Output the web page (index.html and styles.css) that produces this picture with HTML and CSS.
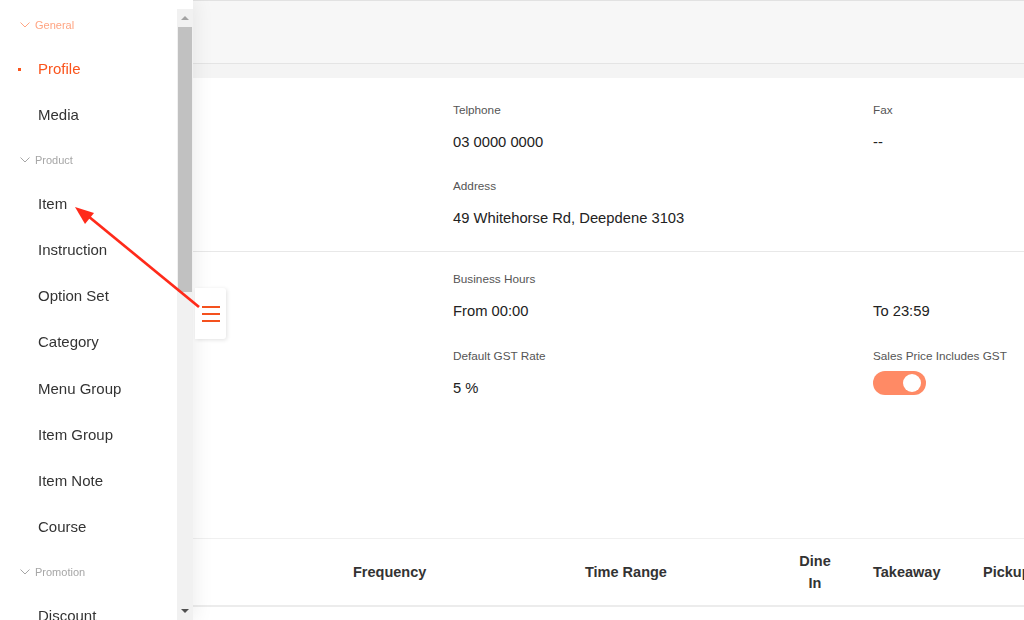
FILE: index.html
```html
<!DOCTYPE html>
<html lang="en">
<head>
    <meta charset="UTF-8">
    <meta name="viewport" content="width=device-width, initial-scale=1.0">
    <title>Store Profile</title>
    <link rel="stylesheet" href="styles.css">
</head>
<body>
    <div class="page">
        <header class="topbar"></header>

        <div class="content">
            <div class="card">
                <section class="info-section first">
                    <div class="field"></div>
                    <div class="field">
                        <div class="field-label">Telphone</div>
                        <div class="field-value">03 0000 0000</div>
                    </div>
                    <div class="field">
                        <div class="field-label">Fax</div>
                        <div class="field-value">--</div>
                    </div>
                    <div class="field"></div>
                    <div class="field">
                        <div class="field-label">Address</div>
                        <div class="field-value">49 Whitehorse Rd, Deepdene 3103</div>
                    </div>
                </section>

                <section class="info-section second">
                    <div class="field"></div>
                    <div class="field">
                        <div class="field-label">Business Hours</div>
                        <div class="field-value">From 00:00</div>
                    </div>
                    <div class="field">
                        <div class="field-label"></div>
                        <div class="field-value">To 23:59</div>
                    </div>
                    <div class="field"></div>
                    <div class="field">
                        <div class="field-label">Default GST Rate</div>
                        <div class="field-value">5 %</div>
                    </div>
                    <div class="field">
                        <div class="field-label">Sales Price Includes GST</div>
                        <div class="field-value">
                            <span class="switch on"><span class="switch-knob"></span></span>
                        </div>
                    </div>
                </section>

                <div class="table-head">
                    <div class="th th-name"></div>
                    <div class="th th-freq">Frequency</div>
                    <div class="th th-range">Time Range</div>
                    <div class="th th-dine">Dine In</div>
                    <div class="th th-take">Takeaway</div>
                    <div class="th th-pick">Pickup</div>
                </div>
            </div>
        </div>
    </div>

    <aside class="drawer">
        <nav class="nav">
            <div class="nav-group active">
                <div class="nav-title"><svg class="chevron" viewBox="0 0 10 6"><path d="M0.5 0.5 L5 5 L9.5 0.5"/></svg>General</div>
                <a class="nav-item current">Profile</a>
                <a class="nav-item">Media</a>
            </div>
            <div class="nav-group">
                <div class="nav-title"><svg class="chevron" viewBox="0 0 10 6"><path d="M0.5 0.5 L5 5 L9.5 0.5"/></svg>Product</div>
                <a class="nav-item">Item</a>
                <a class="nav-item">Instruction</a>
                <a class="nav-item">Option Set</a>
                <a class="nav-item">Category</a>
                <a class="nav-item">Menu Group</a>
                <a class="nav-item">Item Group</a>
                <a class="nav-item">Item Note</a>
                <a class="nav-item">Course</a>
            </div>
            <div class="nav-group">
                <div class="nav-title"><svg class="chevron" viewBox="0 0 10 6"><path d="M0.5 0.5 L5 5 L9.5 0.5"/></svg>Promotion</div>
                <a class="nav-item">Discount</a>
                <a class="nav-item">Surcharge</a>
                <a class="nav-item">Voucher</a>
            </div>
        </nav>

        <div class="scrollbar">
            <div class="scroll-btn up"></div>
            <div class="scroll-thumb"></div>
            <div class="scroll-track"></div>
            <div class="scroll-btn down"></div>
        </div>
    </aside>

    <button type="button" class="drawer-toggle">
        <span class="bar"></span>
        <span class="bar"></span>
        <span class="bar"></span>
    </button>

    <!-- annotation pointing at the Item menu entry -->
    <svg class="annotation" width="240" height="340" viewBox="0 0 240 340">
        <line x1="199" y1="307" x2="88" y2="216" />
        <polygon points="75,207 94,213 85,224" />
    </svg>
</body>
</html>
```

FILE: styles.css
```css
html, body {
    margin: 0;
    height: 100%;
    overflow: hidden;
}

body {
    font-family: "Liberation Sans", Arial, sans-serif;
    color: #333;
    background-color: #fff;
}

.page {
    width: 1293px;
}

.topbar {
    height: 62px;
    background-color: #f7f7f7;
    border-top: 1px solid #e2e2e2;
    border-bottom: 1px solid #e4e4e4;
}

.content {
    padding-top: 14px;
    background-color: #f4f4f4;
}

.card {
    background-color: #fff;
}

.info-section {
    display: grid;
    grid-template-columns: repeat(3, 420px);
    padding-left: 33px;
}

.info-section.first {
    row-gap: 22px;
    padding-top: 22px;
    padding-bottom: 21px;
    border-bottom: 1px solid #e8e8e8;
}

.info-section.second {
    row-gap: 23px;
    padding-top: 17px;
    padding-bottom: 138px;
}

.field-label {
    height: 20px;
    line-height: 20px;
    font-size: 11.75px;
    color: #555;
    margin-bottom: 10px;
}

.field-value {
    height: 24px;
    line-height: 24px;
    font-size: 14.75px;
    color: #222;
}

.switch {
    display: inline-block;
    position: relative;
    width: 53px;
    height: 24px;
    border-radius: 12px;
    background-color: #ccc;
    margin-top: -5px;
    vertical-align: top;
}

.switch.on {
    background-color: #ff8a65;
}

.switch-knob {
    position: absolute;
    top: 3px;
    right: 5px;
    width: 18px;
    height: 18px;
    border-radius: 50%;
    background-color: #fff;
}

.table-head {
    display: flex;
    align-items: center;
    height: 66px;
    padding-left: 33px;
    border-top: 1px solid #f0f0f0;
    border-bottom: 2px solid #ececec;
    font-size: 14.5px;
    font-weight: bold;
    color: #333;
}

.th {
    flex: none;
    box-sizing: border-box;
    line-height: 22px;
}

.th-name { width: 320px; }
.th-freq { width: 232px; }
.th-range { width: 200px; }

.th-dine {
    width: 60px;
    padding: 0 12px;
    text-align: center;
}

.th-take {
    width: 110px;
    padding-left: 28px;
}

.th-pick {
    padding-left: 28px;
}

/* drawer */

.drawer {
    position: fixed;
    top: 0;
    left: 0;
    bottom: 0;
    width: 193px;
    box-sizing: border-box;
    padding-top: 9px;
    display: flex;
    background-color: #fff;
    box-shadow: 3px 0 18px rgba(0, 0, 0, 0.07);
}

.nav {
    flex: 1;
    overflow: hidden;
}

.nav-title {
    display: flex;
    align-items: center;
    padding: 11px 0 11px 20px;
    line-height: 20px;
    font-size: 11px;
    color: #a6a6a6;
}

.nav-group:first-child .nav-title {
    padding-top: 6px;
    padding-bottom: 11px;
}

.nav-group.active .nav-title {
    color: #ffa583;
}

.chevron {
    width: 10px;
    height: 6px;
    margin-right: 5px;
    fill: none;
    stroke: currentColor;
    stroke-width: 1;
}

.nav-item {
    display: block;
    position: relative;
    height: 46.25px;
    line-height: 46.25px;
    padding-left: 38px;
    font-size: 15px;
    color: #333;
    cursor: pointer;
}

.nav-item.current {
    color: #fa541c;
}

.nav-item.current::before {
    content: "";
    position: absolute;
    left: 18px;
    top: 22px;
    width: 3px;
    height: 3px;
    background-color: #fa541c;
}

.scrollbar {
    width: 16px;
    display: flex;
    flex-direction: column;
    background-color: #f1f1f1;
}

.scroll-btn {
    height: 18px;
    display: flex;
    justify-content: center;
    align-items: center;
}

.scroll-btn::after {
    content: "";
    border-left: 4.5px solid transparent;
    border-right: 4.5px solid transparent;
}

.scroll-btn.up::after {
    border-bottom: 4.5px solid #a3a3a3;
}

.scroll-btn.down::after {
    border-top: 4.5px solid #505050;
}

.scroll-thumb {
    height: 265px;
    margin: 0 1px;
    background-color: #c1c1c1;
}

.scroll-track {
    flex: 1;
}

.drawer-toggle {
    position: fixed;
    top: 288px;
    left: 195px;
    width: 31px;
    height: 51px;
    padding: 0;
    border: none;
    border-radius: 0 3px 3px 0;
    background-color: #fff;
    box-shadow: 1px 1px 4px rgba(0, 0, 0, 0.12);
    display: flex;
    flex-direction: column;
    align-items: center;
    justify-content: center;
    gap: 5px;
    cursor: pointer;
}

.drawer-toggle .bar {
    display: block;
    width: 18px;
    height: 2px;
    background-color: #f4511e;
}

.annotation {
    position: fixed;
    top: 0;
    left: 0;
    pointer-events: none;
}

.annotation line {
    stroke: #ff2a1a;
    stroke-width: 2.75;
}

.annotation polygon {
    fill: #ff2a1a;
}
```
